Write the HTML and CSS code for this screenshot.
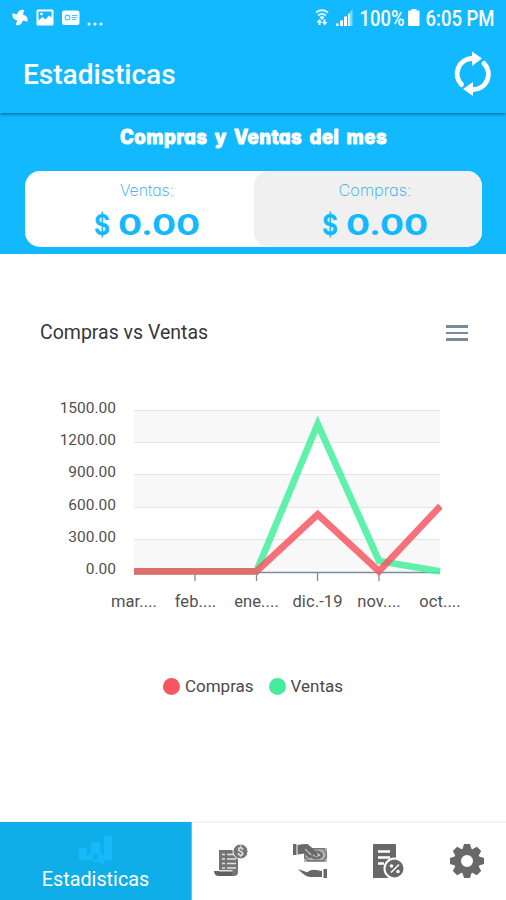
FILE: index.html
```html
<!DOCTYPE html>
<html lang="es">
<head>
<meta charset="utf-8">
<title>Estadisticas</title>
<link rel="stylesheet" href="styles.css">
</head>
<body>
<div class="app">
  <header class="appbar">
    <div class="status">
      <svg class="status-left" width="96" height="36" viewBox="0 0 96 36" fill="#fff">
        <g transform="translate(8 17.5) rotate(12)">
          <path d="M0 0 L-3.5-2 Q-3.2-8 2.5-8.300 L2-1Z"/>
          <path d="M0 0 L-3.5-2 Q-3.2-8 2.5-8.300 L2-1Z" transform="rotate(90)"/>
          <path d="M0 0 L-3.5-2 Q-3.2-8 2.5-8.300 L2-1Z" transform="rotate(180)"/>
          <path d="M0 0 L-3.5-2 Q-3.2-8 2.5-8.300 L2-1Z" transform="rotate(270)"/>
        </g>
        <path fill-rule="evenodd" d="M26 9.5h14q1.500 0 1.500 1.500v13q0 1.500-1.500 1.500H26q-1.500 0-1.500-1.500V11q0-1.500 1.500-1.500zM26.500 11.500v9l4-3.500 3 2.500 3.500-4 2.500 2v-6z"/>
        <circle cx="29.500" cy="14" r="1.300"/>
        <rect x="50" y="10.500" width="17.500" height="14.500" rx="2.500"/>
        <g fill="none" stroke="#13b9ff" stroke-width="1.100" opacity=".8"><circle cx="55.500" cy="17.500" r="2.400"/><path d="M60 15.500h5M60 17.500h5M60 19.500h4"/></g>
        <circle cx="77" cy="24" r="1.500"/><circle cx="83" cy="24" r="1.500"/><circle cx="89" cy="24" r="1.500"/>
      </svg>
      <svg class="status-right" width="188" height="36" viewBox="0 0 188 36" fill="#fff">
        <g fill="none" stroke="#fff" stroke-width="1.900"><path d="M1 12.500q6-4.500 12 0M3 15.500q4-3 8 0" opacity=".85"/></g>
        <path d="M4.500 17q2.500-1.500 5 0L7 20z"/>
        <path d="M4.500 19 7 22.500H5.500V25h-2v-2.500H1.500zM9.500 25.500 7 22h1.500V19.500h2V22h2z"/>
        <path d="M21 23.500h2.500V26H21zM25 20.500h3v5.500h-3zM29 16.500h3V26h-3z"/>
        <path d="M33 13.500h2V26h-2z" opacity=".85"/>
        <path d="M35 12l2.500-2.500V26H35z" opacity=".45"/>
        <text x="44.500" y="26" textLength="45" lengthAdjust="spacingAndGlyphs">100%</text>
        <path d="M96.500 9h5v1.500h2q1 0 1 1V25q0 1-1 1H94q-1 0-1-1V11.500q0-1 1-1h2.500z"/>
        <text x="110.500" y="26" textLength="69" lengthAdjust="spacingAndGlyphs">6:05 PM</text>
      </svg>
    </div>
    <div class="titlebar">
      <h1 class="title">Estadisticas</h1>
      <svg class="refresh" width="38" height="48" viewBox="0 0 38 48" fill="none" stroke="#fff" stroke-width="5">
        <path d="M8.500 35.500A15.300 15.300 0 0 1 19 9.500" stroke-linecap="round"/>
        <path d="M31 14.500A15.300 15.300 0 0 1 19.500 40.500" stroke-linecap="round"/>
        <path d="M19 2.500v14.500l10-7.500zM20 33v14l-10-7z" fill="#fff" stroke="none"/>
      </svg>
    </div>
  </header>

  <section class="summary">
    <svg class="summary-title" width="272" height="30" viewBox="0 0 272 30">
      <text x="3" y="21.500" textLength="267" lengthAdjust="spacingAndGlyphs">Compras y Ventas del mes</text>
    </svg>
    <div class="totals">
      <div class="total">
        <svg width="110" height="76" viewBox="0 0 110 76">
          <text class="total-label" x="28" y="25" textLength="54" lengthAdjust="spacingAndGlyphs">Ventas:</text>
          <text class="total-value" y="64"><tspan x="2" textLength="16" lengthAdjust="spacingAndGlyphs">$</tspan> <tspan x="26" textLength="82" lengthAdjust="spacingAndGlyphs">0.00</tspan></text>
        </svg>
      </div>
      <div class="total total-alt">
        <svg width="110" height="76" viewBox="0 0 110 76">
          <text class="total-label" x="17.500" y="25" textLength="73" lengthAdjust="spacingAndGlyphs">Compras:</text>
          <text class="total-value" y="64"><tspan x="1" textLength="16" lengthAdjust="spacingAndGlyphs">$</tspan> <tspan x="25" textLength="82" lengthAdjust="spacingAndGlyphs">0.00</tspan></text>
        </svg>
      </div>
    </div>
  </section>

  <main class="chart">
    <div class="chart-head">
      <h2 class="chart-title">Compras vs Ventas</h2>
      <div class="menu"><i></i><i></i><i></i></div>
    </div>
    <svg class="plot" width="506" height="240" viewBox="0 385 506 240">
      <g fill="#f8f8f8"><path d="M134 410h306v32.500H134zM134 474.500h306v33H134zM134 539.500h306v32.500H134z"/></g>
      <path d="M134 410.500h306M134 442.500h306M134 474.500h306M134 507.500h306M134 539.500h306" stroke="#e4e4e4"/>
      <path d="M134 572.500h306M195 572v9M256.500 572v9M317.500 572v9M379 572v9" stroke="#78909c" stroke-width="1.300"/>
      <clipPath id="area"><path d="M134 400h308v180H134z"/></clipPath>
      <g fill="none" stroke-width="6.800" clip-path="url(#area)">
        <path d="M134 571.300H256.500L317.700 424 379 561l61 10.300" stroke="#46f0a0" stroke-opacity=".86"/>
        <path d="M134 571.300H256.500L317.700 514.500 379 571.300 440.500 506" stroke="#f55661" stroke-opacity=".84"/>
      </g>
      <g class="axis" text-anchor="end">
        <text x="116" y="412.500">1500.00</text><text x="116" y="444.500">1200.00</text><text x="116" y="477">900.00</text>
        <text x="116" y="509.500">600.00</text><text x="116" y="541.500">300.00</text><text x="116" y="574">0.00</text>
      </g>
      <g class="axis axis-x" text-anchor="middle">
        <text x="134" y="606.500">mar....</text><text x="195.500" y="606.500">feb....</text><text x="256.500" y="606.500">ene....</text>
        <text x="317.500" y="606.500">dic.-19</text><text x="379" y="606.500">nov....</text><text x="440" y="606.500">oct....</text>
      </g>
    </svg>
    <div class="legend">
      <span class="legend-item"><i class="dot dot-red"></i>Compras</span>
      <span class="legend-item"><i class="dot dot-green"></i>Ventas</span>
    </div>
  </main>

  <nav class="tabs">
    <a class="tab tab-active">
      <svg width="38" height="32" viewBox="0 0 38 32" fill="#17b9fb">
        <path d="M2 14h8v12H2zM14 8h9v11h-9zM27 2h8v24h-8z"/>
        <path d="M7 26l6-7h11l6 7z"/>
        <circle cx="18.500" cy="22.500" r="4.500" fill="#10aee8" stroke="#17b9fb" stroke-width="2.500"/>
        <path d="M22 25.500l5 4" stroke="#17b9fb" stroke-width="3"/>
      </svg>
      <span>Estadisticas</span>
    </a>
    <a class="tab">
      <svg width="36" height="36" viewBox="0 0 36 36" fill="#747474">
        <path d="M6 7h19v22q0 4-4 4H6z"/>
        <path d="M1 28h18v2q0 2 1 3H6q-5 0-5-5z" fill="#606060"/>
        <path d="M9 11.500h3M14 11.500h7M9 16h3M14 16h9M9 20.500h3M14 20.500h9M9 25h3M14 25h9M6 27.700h13.500" stroke="#fff" stroke-width="1.600" opacity=".8"/>
        <circle cx="27.500" cy="8.500" r="7.500" stroke="#fff" stroke-width="1"/>
        <text x="27.500" y="12.500" font-size="12" font-weight="700" text-anchor="middle" fill="#ddd">$</text>
      </svg>
    </a>
    <a class="tab">
      <svg width="36" height="36" viewBox="0 0 36 36" fill="#686868">
        <path d="M1 1h3.500v11H1z"/>
        <path d="M12 5h23v14H12z" fill="#b4b4b4"/>
        <path d="M20 5.800h12q0 3 2.300 3.500v5.500q-2.300 0-2.300 3H15.500q0-3-2.800-3V11" fill="none" stroke="#777" stroke-width="1.500"/>
        <ellipse cx="24.500" cy="12" rx="6.500" ry="4.500" fill="#707070"/><path d="M20.500 12q4-3.500 8 0-4 3.500-8 0z" fill="#ddd"/><circle cx="24.500" cy="12" r="1.300"/>
        <path d="M5.500 2q4-1 10-1l6 5 4 5.500-2 1.500-6-4 2 5-2 1.500-5-5-7 1z"/>
        <path d="M13 6l6 6" stroke="#bbb" stroke-width="1.200"/>
        <path d="M6 26l9 3.200q5-3.200 9-2.200l6 1v6H18q-6-1-12-8zM31.500 26H35v9h-3.500z"/>
      </svg>
    </a>
    <a class="tab">
      <svg width="36" height="36" viewBox="0 0 36 36" fill="#686868">
        <path d="M3 2q0-1 1-1h21q1 0 1 1v33H3z"/>
        <path d="M8 8.500h12M8 14.500h12M8 20.500h6" stroke="#fff" stroke-width="2.400"/>
        <circle cx="24.500" cy="25.500" r="10" stroke="#fff" stroke-width="2"/>
        <g fill="none" stroke="#fff" stroke-width="1.600"><path d="M29 21.500l-8 8"/><circle cx="21.500" cy="23" r="1"/><circle cx="28" cy="28.500" r="1"/></g>
      </svg>
    </a>
    <a class="tab">
      <svg width="36" height="36" viewBox="-18 -18 36 36" fill="#686868">
        <circle r="9.500" fill="none" stroke="#686868" stroke-width="7"/>
        <path d="M-4.500-12l1.500-5h6l1.500 5zM-4.500 12l1.500 5h6l1.500-5zM-12-4.500l-5 1.500v6l5 1.500zM12-4.500l5 1.500v6l-5 1.500z"/>
        <path d="M-4.500-12l1.500-5h6l1.500 5zM-4.500 12l1.500 5h6l1.500-5zM-12-4.500l-5 1.500v6l5 1.500zM12-4.500l5 1.500v6l-5 1.500z" transform="rotate(45)"/>
      </svg>
    </a>
  </nav>
</div>
</body>
</html>
```
FILE: styles.css
```css
* { box-sizing: border-box; }
body { margin: 0; background: #fff; font-family: Roboto, "Liberation Sans", sans-serif; }
svg { display: block; flex: none; overflow: visible; }
.app { width: 506px; height: 900px; display: flex; flex-direction: column; overflow: hidden; }

.appbar { position: relative; height: 113px; background: #13b9ff; color: #fff; box-shadow: 0 1px 4px rgba(0, 50, 80, .65); }
.status { height: 36px; padding: 0 3px 0 12px; display: flex; justify-content: space-between; }
.status-right { font-size: 21.5px; font-weight: 500; }
.titlebar { height: 77px; padding: 13px 15px 0 23px; display: flex; justify-content: space-between; }
.title { margin: 9px 0 0; font-size: 28px; line-height: 34px; font-weight: 500; }

.summary { height: 141px; padding: 9px 24px 0 25px; background: #13b9ff; }
.summary-title { margin: 0 0 19px 92px; font-family: Inter, sans-serif; font-size: 19.5px; font-weight: 800; letter-spacing: .5px; word-spacing: 3px; font-feature-settings: "cv11"; fill: #fff; stroke: #fff; stroke-width: .9; stroke-linejoin: round; }
.totals { display: flex; height: 76px; background: #fff; border-radius: 15px; overflow: hidden; }
.total { flex: 1; display: flex; justify-content: center; padding-left: 16px; }
.total-alt { background: #f0f0f0; border-radius: 15px; }
.total-label { font-family: Inter, sans-serif; font-size: 16.5px; font-weight: 200; font-feature-settings: "cv11"; fill: #2aaaf0; }
.total-value { font-family: Inter, sans-serif; font-size: 29px; font-weight: 700; fill: #13b9ff; }

.chart { flex: 1; padding-top: 66px; }
.chart-head { height: 65px; padding: 0 38px 0 40px; display: flex; justify-content: space-between; }
.chart-title { margin: 0; font-size: 19.5px; line-height: 26px; font-weight: 400; color: #373737; }
.menu { width: 22px; padding-top: 5px; display: flex; flex-direction: column; gap: 4px; }
.menu i { height: 2.5px; background: #778b9c; }
.axis { font-size: 15.5px; fill: #505050; }
.axis-x { font-size: 16.5px; letter-spacing: .1px; }
.legend { display: flex; justify-content: center; gap: 15px; padding-top: 50px; font-size: 17px; line-height: 22px; color: #4a4a4a; }
.legend-item { display: flex; align-items: center; gap: 5px; }
.dot { width: 17px; height: 17px; border-radius: 50%; }
.dot-red { background: #f55661; }
.dot-green { background: #46ec9c; }

.tabs { height: 79px; display: flex; border-top: 2px solid #f4f4f4; }
.tab { width: 78.5px; padding-top: 20px; display: flex; flex-direction: column; align-items: center; }
.tab-active { width: 192px; margin-top: -1px; padding-top: 12px; background: #10aee8; color: #fff; font-size: 19.8px; line-height: 27px; border-right: 1px solid #5cc9f0; }
```
